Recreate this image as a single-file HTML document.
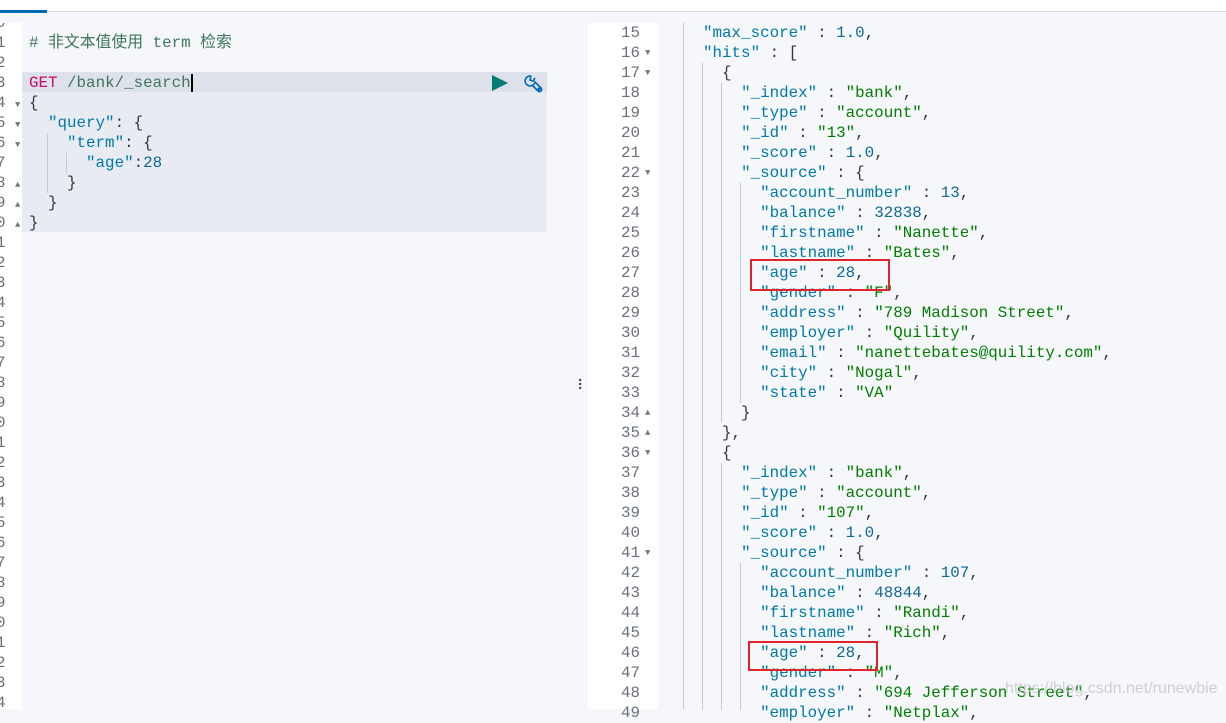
<!DOCTYPE html>
<html><head><meta charset="utf-8"><style>
*{margin:0;padding:0;box-sizing:border-box}
body{width:1226px;height:709px;overflow:hidden;background:#f5f7fa;position:relative;font-family:"Liberation Mono","Noto Sans CJK SC",monospace;font-size:15.85px}
.top{position:absolute;left:0;top:0;width:1226px;height:12px;background:#fff;border-bottom:1px solid #d3dae6}
.tab{position:absolute;left:0;top:10px;width:47px;height:3px;background:#006bb4}
.lg{position:absolute;left:0;top:23px;width:22px;height:686px;background:#fff;overflow:hidden}
.ln{position:absolute;height:20px;line-height:20px;color:#69707d;white-space:pre}
.ed{position:absolute;left:22px;top:23px;width:548px;height:686px;background:#f5f7fa}
.blk{position:absolute;left:22px;top:72px;width:525px;height:160px;background:#e8ebf2}
.cur{position:absolute;left:22px;top:72px;width:525px;height:20px;background:#dde1e9}
.l{position:absolute;height:20px;line-height:20px;white-space:pre;color:#343741}
.k{color:#0079a5}.s{color:#017d00}.n{color:#0d6896}.c{color:#41755c}.m{color:#c80a68}.p{color:#343741}
.div{position:absolute;left:570px;top:23px;width:18px;height:686px;background:#f5f7fa}
.rg{position:absolute;left:588px;top:23px;width:70px;height:686px;background:#fff}
.g{position:absolute;width:1px;background:#c5c9d1}
.box{position:absolute;border:2px solid #e0242c}
.ar{font-size:9px;color:#777}
</style></head><body>
<div class="top"><div class="tab"></div></div>
<div class="ed"></div>
<div class="blk"></div><div class="cur"></div>
<div class="lg">
<div class="ln" style="left:-4px;top:-10px">0</div>
<div class="ln" style="left:-4px;top:10px">1</div>
<div class="ln" style="left:-4px;top:30px">2</div>
<div class="ln" style="left:-4px;top:50px">3</div>
<div class="ln" style="left:-4px;top:70px">4 <span class="ar">▼</span></div>
<div class="ln" style="left:-4px;top:90px">5 <span class="ar">▼</span></div>
<div class="ln" style="left:-4px;top:110px">6 <span class="ar">▼</span></div>
<div class="ln" style="left:-4px;top:130px">7</div>
<div class="ln" style="left:-4px;top:150px">8 <span class="ar">▲</span></div>
<div class="ln" style="left:-4px;top:170px">9 <span class="ar">▲</span></div>
<div class="ln" style="left:-4px;top:190px">0 <span class="ar">▲</span></div>
<div class="ln" style="left:-4px;top:210px">1</div>
<div class="ln" style="left:-4px;top:230px">2</div>
<div class="ln" style="left:-4px;top:250px">3</div>
<div class="ln" style="left:-4px;top:270px">4</div>
<div class="ln" style="left:-4px;top:290px">5</div>
<div class="ln" style="left:-4px;top:310px">6</div>
<div class="ln" style="left:-4px;top:330px">7</div>
<div class="ln" style="left:-4px;top:350px">8</div>
<div class="ln" style="left:-4px;top:370px">9</div>
<div class="ln" style="left:-4px;top:390px">0</div>
<div class="ln" style="left:-4px;top:410px">1</div>
<div class="ln" style="left:-4px;top:430px">2</div>
<div class="ln" style="left:-4px;top:450px">3</div>
<div class="ln" style="left:-4px;top:470px">4</div>
<div class="ln" style="left:-4px;top:490px">5</div>
<div class="ln" style="left:-4px;top:510px">6</div>
<div class="ln" style="left:-4px;top:530px">7</div>
<div class="ln" style="left:-4px;top:550px">8</div>
<div class="ln" style="left:-4px;top:570px">9</div>
<div class="ln" style="left:-4px;top:590px">0</div>
<div class="ln" style="left:-4px;top:610px">1</div>
<div class="ln" style="left:-4px;top:630px">2</div>
<div class="ln" style="left:-4px;top:650px">3</div>
<div class="ln" style="left:-4px;top:670px">4</div>
</div>
<div class="l c" style="left:29px;top:33px"># 非文本值使用 term 检索</div>
<div class="l" style="left:29px;top:73px"><span class="m">GET</span> <span class="c">/bank/_search</span><span style="display:inline-block;width:2px;height:18px;background:#000;vertical-align:middle"></span></div>
<div class="l" style="left:29px;top:93px">{</div>
<div class="l" style="left:29px;top:113px">  <span class="k">"query"</span>: {</div>
<div class="l" style="left:29px;top:133px">    <span class="k">"term"</span>: {</div>
<div class="l" style="left:29px;top:153px">      <span class="k">"age"</span>:<span class="n">28</span></div>
<div class="l" style="left:29px;top:173px">    }</div>
<div class="l" style="left:29px;top:193px">  }</div>
<div class="l" style="left:29px;top:213px">}</div>
<div class="g" style="left:47px;top:133px;height:60px"></div>
<div class="g" style="left:66px;top:153px;height:20px"></div>
<svg style="position:absolute;left:491px;top:74px" width="18" height="18"><path d="M1 1 L17 9 L1 17Z" fill="#017d73"/></svg>
<svg style="position:absolute;left:523px;top:74px" width="22" height="22" fill="none" stroke="#006bb4" stroke-width="1.6"><path d="M8 2 A5 5 0 1 0 12 8 L18 14 A2 2 0 0 1 15 17 L9 11 M8 2 L7 6 L10 7 L12 4"/><circle cx="16" cy="15" r="0.8" fill="#006bb4"/></svg>
<div class="div"><div style="position:absolute;left:6px;top:356px;color:#343741;font-size:14px;font-weight:bold;line-height:4px">·<br>·<br>·</div></div>
<div class="rg"></div>
<div id="r"></div>
<div class="g" style="left:683px;top:23px;height:686px"></div>
<div class="g" style="left:702px;top:63px;height:647px"></div>
<div class="g" style="left:721px;top:83px;height:340px"></div>
<div class="g" style="left:740px;top:183px;height:220px"></div>
<div class="g" style="left:721px;top:463px;height:247px"></div>
<div class="g" style="left:740px;top:563px;height:147px"></div>
<div class="box" style="left:750px;top:259px;width:140px;height:32px"></div>
<div class="box" style="left:748px;top:641px;width:130px;height:30px"></div>
<div style="position:absolute;left:1005px;top:680px;color:rgba(190,190,190,.7);font-family:'Liberation Sans',sans-serif;font-size:16px">https://blog.csdn.net/runewbie</div>
<script>
var L=[
['15','    <span class="k">"max_score"</span> : <span class="n">1.0</span>,'],
['16▼','    <span class="k">"hits"</span> : ['],
['17▼','      {'],
['18','        <span class="k">"_index"</span> : <span class="s">"bank"</span>,'],
['19','        <span class="k">"_type"</span> : <span class="s">"account"</span>,'],
['20','        <span class="k">"_id"</span> : <span class="s">"13"</span>,'],
['21','        <span class="k">"_score"</span> : <span class="n">1.0</span>,'],
['22▼','        <span class="k">"_source"</span> : {'],
['23','          <span class="k">"account_number"</span> : <span class="n">13</span>,'],
['24','          <span class="k">"balance"</span> : <span class="n">32838</span>,'],
['25','          <span class="k">"firstname"</span> : <span class="s">"Nanette"</span>,'],
['26','          <span class="k">"lastname"</span> : <span class="s">"Bates"</span>,'],
['27','          <span class="k">"age"</span> : <span class="n">28</span>,'],
['28','          <span class="k">"gender"</span> : <span class="s">"F"</span>,'],
['29','          <span class="k">"address"</span> : <span class="s">"789 Madison Street"</span>,'],
['30','          <span class="k">"employer"</span> : <span class="s">"Quility"</span>,'],
['31','          <span class="k">"email"</span> : <span class="s">"nanettebates@quility.com"</span>,'],
['32','          <span class="k">"city"</span> : <span class="s">"Nogal"</span>,'],
['33','          <span class="k">"state"</span> : <span class="s">"VA"</span>'],
['34▲','        }'],
['35▲','      },'],
['36▼','      {'],
['37','        <span class="k">"_index"</span> : <span class="s">"bank"</span>,'],
['38','        <span class="k">"_type"</span> : <span class="s">"account"</span>,'],
['39','        <span class="k">"_id"</span> : <span class="s">"107"</span>,'],
['40','        <span class="k">"_score"</span> : <span class="n">1.0</span>,'],
['41▼','        <span class="k">"_source"</span> : {'],
['42','          <span class="k">"account_number"</span> : <span class="n">107</span>,'],
['43','          <span class="k">"balance"</span> : <span class="n">48844</span>,'],
['44','          <span class="k">"firstname"</span> : <span class="s">"Randi"</span>,'],
['45','          <span class="k">"lastname"</span> : <span class="s">"Rich"</span>,'],
['46','          <span class="k">"age"</span> : <span class="n">28</span>,'],
['47','          <span class="k">"gender"</span> : <span class="s">"M"</span>,'],
['48','          <span class="k">"address"</span> : <span class="s">"694 Jefferson Street"</span>,'],
['49','          <span class="k">"employer"</span> : <span class="s">"Netplax"</span>,']
];
var h='';
L.forEach(function(x,i){var t=23+i*20;var n=x[0].replace(/[▼▲]/,''),a=x[0].length>2?x[0].slice(2):'';
h+='<div class="ln" style="left:621px;top:'+t+'px">'+n+'</div>';
if(a)h+='<div class="ln ar" style="left:645px;top:'+t+'px">'+a+'</div>';
h+='<div class="l" style="left:665px;top:'+t+'px">'+x[1]+'</div>';});
document.getElementById('r').innerHTML=h;
</script>
</body></html>
